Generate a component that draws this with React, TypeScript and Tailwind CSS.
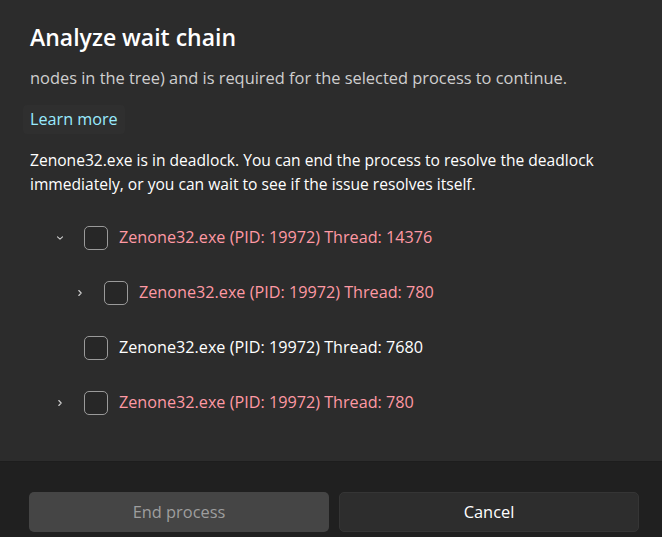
import React from "react";

type Row = {
  indent: number;
  chevron: "down" | "right" | null;
  label: string;
  blocked: boolean;
};

const rows: Row[] = [
  { indent: 0, chevron: "down", label: "Zenone32.exe (PID: 19972) Thread: 14376", blocked: true },
  { indent: 20, chevron: "right", label: "Zenone32.exe (PID: 19972) Thread: 780", blocked: true },
  { indent: 0, chevron: null, label: "Zenone32.exe (PID: 19972) Thread: 7680", blocked: false },
  { indent: 0, chevron: "right", label: "Zenone32.exe (PID: 19972) Thread: 780", blocked: true },
];

function Chevron({ dir }: { dir: "down" | "right" }) {
  return (
    <svg width="12" height="12" viewBox="0 0 12 12" fill="none">
      {dir === "down" ? (
        <path d="M3.5 4.8 L6 7.2 L8.5 4.8" stroke="#cfcfcf" strokeWidth="1.1" strokeLinecap="round" strokeLinejoin="round" />
      ) : (
        <path d="M4.8 3.5 L7.2 6 L4.8 8.5" stroke="#cfcfcf" strokeWidth="1.1" strokeLinecap="round" strokeLinejoin="round" />
      )}
    </svg>
  );
}

export default function App() {
  return (
    <div className="w-[662px] h-[537px] bg-[#2c2c2c] flex flex-col font-['Segoe_UI','Open_Sans',sans-serif] overflow-hidden">
      {/* Content */}
      <div className="flex-1 pl-[30px] pr-4 pt-[20px]">
        <h1 className="text-[23px] leading-[34px] font-semibold text-white">Analyze wait chain</h1>
        <p className="mt-[11px] text-[16.4px] leading-[25px] text-[#cfcfcf] whitespace-nowrap">
          nodes in the tree) and is required for the selected process to continue.
        </p>
        <div className="mt-[15px] -ml-[7px] inline-flex items-center h-[29px] px-[7px] rounded-[4px] bg-[#2f2f2f]">
          <span className="text-[16.2px] text-[#99ebff]">Learn more</span>
        </div>
        <p className="mt-[14px] text-[15.6px] leading-[24px] text-white whitespace-nowrap">
          Zenone32.exe is in deadlock. You can end the process to resolve the deadlock
          <br />
          immediately, or you can wait to see if the issue resolves itself.
        </p>
        <div className="mt-[14px] flex flex-col">
          {rows.map((r, i) => (
            <div key={i} className="h-[55px] flex items-center" style={{ paddingLeft: r.indent }}>
              <div className="w-[54px] flex items-center justify-end pr-[18px]">
                {r.chevron && <Chevron dir={r.chevron} />}
              </div>
              <div className="w-[24px] h-[24px] rounded-[5px] border border-[#9a9a9a] bg-[#272727]" />
              <span
                className={`ml-[11px] text-[16.2px] whitespace-nowrap ${r.blocked ? "text-[#ff99a4]" : "text-white"}`}
              >
                {r.label}
              </span>
            </div>
          ))}
        </div>
      </div>
      {/* Footer */}
      <div className="h-[76px] bg-[#202020] border-t border-[#1d1d1d] flex gap-[10px] pl-[29px] pt-[30px]">
        <button className="w-[300px] h-[40px] rounded-[5px] bg-[#454545] text-[16.4px] text-[#9e9e9e]">
          End process
        </button>
        <button className="w-[300px] h-[40px] rounded-[5px] bg-[#2d2d2d] border border-[#353535] text-[16.4px] text-white">
          Cancel
        </button>
      </div>
    </div>
  );
}
